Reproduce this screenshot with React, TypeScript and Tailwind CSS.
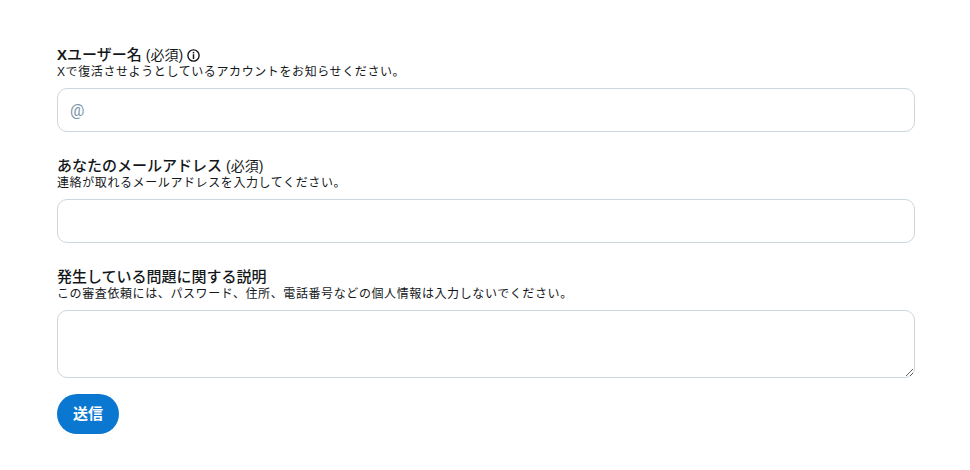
export default function App() {
  return (
    <div className="w-[970px] h-[470px] overflow-hidden bg-white pt-[45px] pl-[57px] pr-[55px] font-['Liberation_Sans','Noto_Sans_CJK_JP',sans-serif] text-[#14171a]">
      <form className="flex flex-col">
        <div className="flex flex-col">
          <label className="flex items-center h-[20px] text-[15px] leading-[20px]">
            <span className="font-bold">X</span>
            <span className="font-medium">ユーザー名</span>
            <span className="ml-[4px] text-[14px]">(必須)</span>
            <svg className="ml-[4px] mt-[1px]" width="13" height="13" viewBox="0 0 13 13" fill="none">
              <circle cx="6.5" cy="6.5" r="5.6" stroke="#14171a" strokeWidth="1.4" />
              <rect x="5.75" y="2.9" width="1.5" height="1.5" fill="#14171a" />
              <rect x="5.75" y="5.2" width="1.5" height="4.8" fill="#14171a" />
            </svg>
          </label>
          <p className="text-[12px] leading-[14px] tracking-[0.6px]">Xで復活させようとしているアカウントをお知らせください。</p>
          <input placeholder="@" className="mt-[9px] h-[44px] w-full rounded-[10px] border border-[#ccd6dd] px-[12px] font-['Roboto',sans-serif] text-[16px] outline-none placeholder:text-[#7a94a8]" />
        </div>
        <div className="flex flex-col mt-[24px]">
          <label className="flex items-center h-[20px] text-[15px] leading-[20px]">
            <span className="font-medium">あなたのメールアドレス</span>
            <span className="ml-[4px] text-[14px]">(必須)</span>
          </label>
          <p className="text-[12px] leading-[14px] tracking-[0.6px]">連絡が取れるメールアドレスを入力してください。</p>
          <input className="mt-[9px] h-[44px] w-full rounded-[10px] border border-[#ccd6dd] px-[12px] text-[14px] outline-none" />
        </div>
        <div className="flex flex-col mt-[24px]">
          <label className="flex items-center h-[20px] text-[15px] leading-[20px]">
            <span className="font-medium">発生している問題に関する説明</span>
          </label>
          <p className="text-[12px] leading-[14px] tracking-[0.6px]">この審査依頼には、パスワード、住所、電話番号などの個人情報は入力しないでください。</p>
          <textarea className="mt-[9px] h-[68px] w-full rounded-[10px] border border-[#ccd6dd] px-[12px] py-[8px] text-[14px] outline-none block" />
        </div>
        <button type="button" className="mt-[16px] h-[40px] w-[62px] rounded-full bg-[#0a78d1] text-white text-[15px] font-bold">送信</button>
      </form>
    </div>
  );
}
